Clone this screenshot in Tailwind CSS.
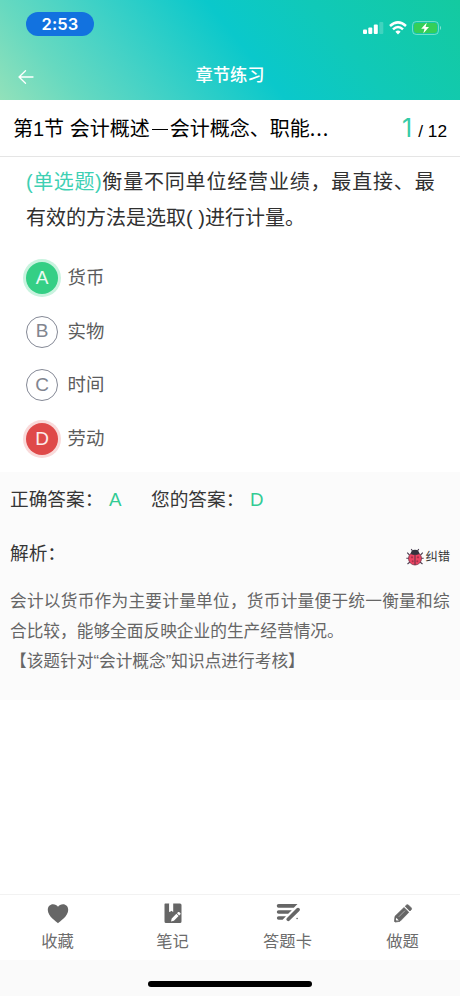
<!DOCTYPE html>
<html lang="zh-CN">
<head>
<meta charset="utf-8">
<title>章节练习</title>
<script src="https://cdn.jsdelivr.net/npm/@tailwindcss/browser@4"></script>
</head>
<body class="bg-white">
<div class="w-[460px] h-[996px] flex flex-col overflow-hidden bg-white font-['Liberation_Sans','Noto_Sans_CJK_SC',sans-serif] whitespace-nowrap">
  <header class="h-[100px] shrink-0 flex flex-col text-white bg-[linear-gradient(51deg,#92e1ba_0%,#66d9c0_15%,#4ad3c5_27%,#0ac8cb_53%,#10c9b8_72%,#14caa0_100%)]">
    <div class="h-[50px] flex justify-between pl-[26px] pr-[18px]">
      <div class="mt-3 w-[68px] h-6 rounded-full bg-[#1272df] flex items-center justify-center font-['Inter',sans-serif] font-semibold text-[16.5px] tracking-[0.1px]">2:53</div>
      <div class="flex items-center h-[55px] gap-[5px]">
        <svg width="21" height="12" viewBox="0 0 21 12" fill="#fff"><rect x="0" y="7.5" width="4" height="4.5" rx="1"/><rect x="5.3" y="5.5" width="4" height="6.5" rx="1"/><rect x="10.8" y="2.5" width="4" height="9.5" rx="1"/><rect x="16.3" y="0" width="4" height="12" rx="1" opacity=".2"/></svg>
        <svg width="18" height="14" viewBox="0 0 18 14" fill="none" stroke="#fff" stroke-width="2.5"><path d="M1 5Q9-2.2 17 5"/><path d="M4 8.3Q9 3.7 14 8.3"/><path d="M6.4 10.7Q9 8.3 11.6 10.7L9 13.4Z" fill="#fff" stroke="none"/></svg>
        <svg width="30" height="14" viewBox="0 0 30 14"><rect x=".5" y=".5" width="26" height="13" rx="3.8" fill="none" stroke="#fff" stroke-opacity=".4"/><rect x="2" y="2" width="23" height="10" rx="2.4" fill="#35cf58"/><path d="M28 4.8Q30 7 28 9.2Z" fill="#fff" opacity=".5"/><path d="M14.8 1.5L9.2 7.8H12.5L11.3 12.5L17 6H13.6Z" fill="#fff"/></svg>
      </div>
    </div>
    <div class="h-[50px] grid grid-cols-[60px_1fr_60px] items-center">
      <svg class="ml-[18px] mt-1" width="16" height="14" viewBox="0 0 16 14" fill="none" stroke="#fff" stroke-width="1.3" stroke-linecap="round" stroke-linejoin="round"><path d="M7.5.8L1 7L7.5 13.2M1 7H15"/></svg>
      <h1 class="text-center text-[17.3px] font-medium pt-0.5">章节练习</h1>
    </div>
  </header>
  <section class="h-[57px] shrink-0 flex items-center justify-between border-b border-[#e5e5e5] px-[13px] text-black">
    <h2 class="text-[20px] leading-7 pt-px">第1节 会计概述<span class="inline-block w-5 text-center"><span class="inline-block w-4 h-[1.5px] bg-black align-[6px]"></span></span>会计概念、职能<span class="font-['Noto_Sans_CJK_SC',sans-serif] tracking-[1px]">...</span></h2>
    <div class="flex items-baseline"><span class="text-[25px] leading-7 text-[#35cba6] font-['Noto_Sans_CJK_SC','Inter',sans-serif] font-normal"><span class="font-['Inter',sans-serif]">1</span></span><span class="ml-[6px] text-[17.3px]">/ 12</span></div>
  </section>
  <main class="h-[315px] shrink-0 pl-[26px] pt-[7px] flex flex-col">
    <div class="text-[20px] leading-[36px] text-[#303030]">
      <p class="tracking-[0.82px]"><span class="text-[#3ed0b3] tracking-[0.6px]">(单选题)</span>衡量不同单位经营业绩，最直接、最</p>
      <p>有效的方法是选取( )进行计量。</p>
    </div>
    <ul class="mt-[17px] flex flex-col text-[18.4px] text-[#5c5c5c]">
      <li class="h-[53.7px] flex items-center gap-[9.5px] -mt-0.5"><span class="size-8 rounded-full flex items-center justify-center bg-[#34cf85] text-white/90 ring-[3px] ring-[#c9f3df] text-[19px]">A</span>货币</li>
      <li class="h-[53.7px] flex items-center gap-[9.5px]"><span class="size-8 rounded-full flex items-center justify-center border border-[#858996] text-[#81858f] text-[19px]">B</span>实物</li>
      <li class="h-[53.7px] flex items-center gap-[9.5px]"><span class="size-8 rounded-full flex items-center justify-center border border-[#858996] text-[#81858f] text-[19px]">C</span>时间</li>
      <li class="h-[53.7px] flex items-center gap-[9.5px]"><span class="size-8 rounded-full flex items-center justify-center bg-[#df4949] text-white/90 ring-[3px] ring-[#f9dada] text-[19px]">D</span>劳动</li>
    </ul>
  </main>
  <section class="h-[228px] shrink-0 bg-[#fbfbfb] px-[10px] pt-px flex flex-col">
    <div class="h-[54px] flex items-center text-[18.7px] text-[#363636]"><span class="w-[99px]">正确答案：</span><span class="w-[42px] text-[#32cb94]">A</span><span class="w-[99px]">您的答案：</span><span class="text-[#32cb94]">D</span></div>
    <div class="h-[54px] flex items-center justify-between text-[18.7px] text-[#363636]">
      <span>解析：</span>
      <span class="flex items-center text-[12.3px] gap-px mt-[7px]">
        <svg class="-mt-0.5" width="18" height="18" viewBox="0 0 18 18"><g fill="none" stroke="#493d50" stroke-width="1.1"><path d="M6.5 3L5.2 1M11.5 3L12.8 1M3.5 7L1.2 4.7M14.5 7L16.8 4.7M3 10.3H.3M15 10.3H17.7M4 14L1.5 16M14 14L16.5 16"/></g><circle cx="9" cy="10.5" r="6.5" fill="#ec4462" stroke="#753349" stroke-width=".8"/><path d="M4.5 6Q5 1.7 9 1.7T13.5 6Q9 8 4.5 6Z" fill="#34323d"/><path d="M9 6V17" stroke="#5b3044" stroke-width="1"/><g fill="#a8304b"><circle cx="6" cy="9.3" r="1.1"/><circle cx="12" cy="9.3" r="1.1"/><circle cx="6.7" cy="13.3" r="1"/><circle cx="11.3" cy="13.3" r="1"/></g></svg>纠错</span>
    </div>
    <div class="mt-[6px] text-[16.7px] leading-[30px] text-[#666]">
      <p class="tracking-[0.23px]">会计以货币作为主要计量单位，货币计量便于统一衡量和综</p>
      <p>合比较，能够全面反映企业的生产经营情况。</p>
      <p>【该题针对“会计概念”知识点进行考核】</p>
    </div>
  </section>
  <div class="grow"></div>
  <nav class="h-[66px] shrink-0 grid grid-cols-4 border-t border-[#f2f2f2] text-[16.3px] text-[#6c6c6c]">
    <a class="flex flex-col items-center pt-2"><svg width="22" height="22" viewBox="0 0 22 22" fill="#666"><path d="M11 20.3C9.7 18.7 .8 13.5 .8 7C.8 3.5 3.1 1.3 6 1.3C8.2 1.3 10 2.3 11 3.8C12 2.3 13.8 1.3 16 1.3C18.9 1.3 21.2 3.5 21.2 7C21.2 13.5 12.3 18.7 11 20.3Z"/></svg><span class="mt-1 leading-6">收藏</span></a>
    <a class="flex flex-col items-center pt-2"><svg width="22" height="22" viewBox="0 0 22 22"><path fill="#666" d="M3.2 .5H7.3V9L9.3 7.8L11.2 9V.5H18Q19.5 .5 19.5 2V18.5Q19.5 20 18 20H4Q2.5 20 2.5 18.5V1.2Q2.5 .5 3.2 .5Z"/><path fill="#fff" d="M7.3 .5H9.5V7.7L7.3 9ZM9 18.4L9.7 15.5L14.4 10.8L16.6 13L11.9 17.7ZM15 10.2L16.1 9.1Q17.2 8.7 18.3 9.9T17.9 11.7L17.2 12.4Z"/></svg><span class="mt-1 leading-6">笔记</span></a>
    <a class="flex flex-col items-center pt-2"><svg width="24" height="22" viewBox="0 0 24 22" fill="none" stroke="#666" stroke-linecap="round"><path fill="#666" stroke="none" d="M2.6 1H21.5L17.8 4.7H2.6A1.85 1.85 0 0 1 2.6 1ZM2.6 7.2H15.8L12.2 10.8H2.6A1.8 1.8 0 0 1 2.6 7.2ZM2.6 13.2H10L6.6 16.7H2.6A1.75 1.75 0 0 1 2.6 13.2Z"/><path stroke-width="3.7" d="M12.3 16.3L22 6.6"/><path stroke-width="1.4" d="M21 15.5H21.2"/></svg><span class="mt-1 leading-6">答题卡</span></a>
    <a class="flex flex-col items-center pt-2"><svg width="22" height="22" viewBox="0 0 22 22"><path fill="#666" stroke="#666" stroke-width=".8" stroke-linejoin="round" d="M2.5 18.5L3 13.3L12 4.6L16.8 9.3L8 18.3L3.3 19ZM13.2 3.3L14.6 2Q15.6 1.3 16.6 2.2L19.1 4.7Q20 5.7 19.2 6.7L17.9 8Z"/><path fill="#fff" d="M4.2 14.8L6.9 17.4L4.5 17.5L3.9 17Z"/><path d="M6.8 13.8L13 7.6" stroke="#bbb" stroke-width=".8"/></svg><span class="mt-1 leading-6">做题</span></a>
  </nav>
  <footer class="h-9 shrink-0 bg-[#fafafa] flex justify-center pt-[21px]"><div class="w-[164px] h-[6px] rounded-full bg-black"></div></footer>
</div>
</body>
</html>
